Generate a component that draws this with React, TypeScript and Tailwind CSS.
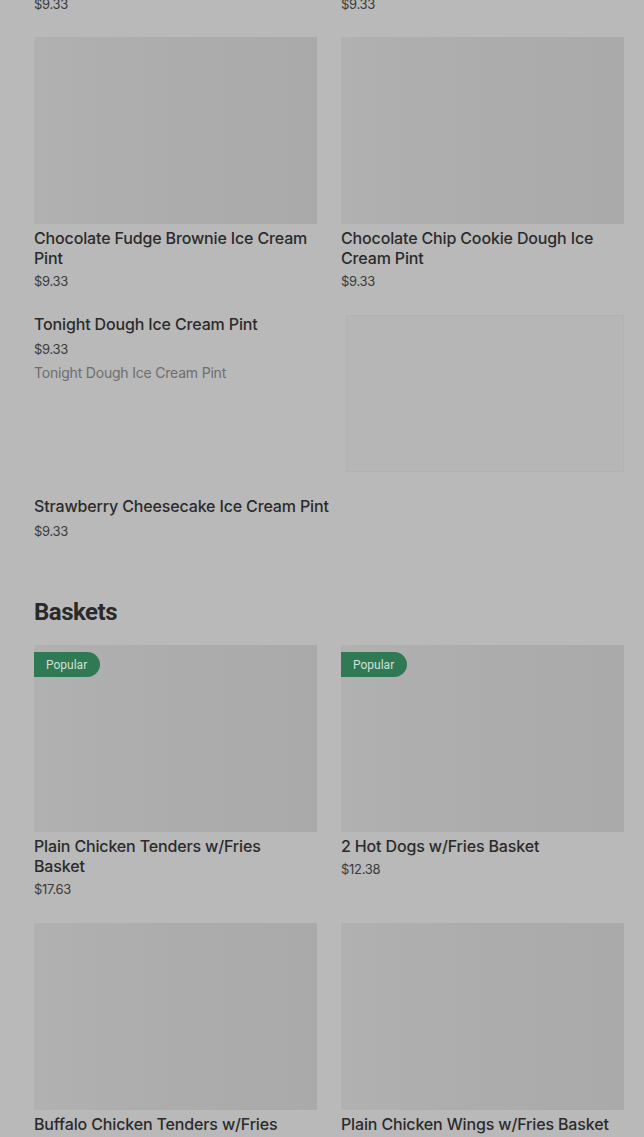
import React from 'react';

// one menu tile: placeholder picture, name and price
interface ItemProps {
    title: string;
    price: string;
    popular?: boolean;
}

const Item: React.FC<ItemProps> = ({ title, price, popular }) => {
    return (
        <div className="flex flex-col">
            <div className="relative h-[187px] w-full bg-gradient-to-r from-[#b1b1b1] via-[#acacac] to-[#aaaaaa]">
                {popular && (
                    <span className="absolute left-0 top-[7px] flex h-[25px] items-center rounded-r-full bg-[#2f7a55] pl-3 pr-[13px] font-['Roboto',sans-serif] text-[12px] text-[#cfe0d6]">
                        Popular
                    </span>
                )}
            </div>
            <p className="mt-1 pr-[6px] text-[16px] font-medium leading-5 tracking-[-0.15px] text-[#2b2b2b]">{title}</p>
            <p className="mt-1 text-[13px] leading-[18px] tracking-[-0.3px] text-[#3b3b3b]">{price}</p>
        </div>
    );
};

export default function App() {
    return (
        <div className="min-h-screen overflow-hidden bg-[#b9b9b9] pl-[34px] pr-[20px] font-['Inter',sans-serif]">
            {/* tail of the row that is scrolled above */}
            <div className="-mt-[5px] grid grid-cols-2 gap-x-6">
                <p className="text-[13px] leading-[18px] tracking-[-0.3px] text-[#3b3b3b]">$9.33</p>
                <p className="text-[13px] leading-[18px] tracking-[-0.3px] text-[#3b3b3b]">$9.33</p>
            </div>

            <div className="mt-6 grid grid-cols-2 gap-x-6">
                <Item title="Chocolate Fudge Brownie Ice Cream Pint" price="$9.33" />
                <Item title="Chocolate Chip Cookie Dough Ice Cream Pint" price="$9.33" />
            </div>

            <div className="mt-6 flex justify-between">
                <div className="flex flex-col">
                    <p className="text-[16px] font-medium leading-5 tracking-[-0.15px] text-[#2b2b2b]">Tonight Dough Ice Cream Pint</p>
                    <p className="mt-[6px] text-[13px] leading-[18px] tracking-[-0.3px] text-[#3b3b3b]">$9.33</p>
                    <p className="mt-[6px] text-[14px] leading-[18px] tracking-[-0.2px] text-[#6e6e6e]">Tonight Dough Ice Cream Pint</p>
                </div>
                <div className="mt-px h-[157px] w-[278px] border border-[#b2b2b2] bg-[#b6b6b6]" />
            </div>

            <div className="mt-6 flex flex-col">
                <p className="text-[16px] font-medium leading-5 tracking-[-0.15px] text-[#2b2b2b]">Strawberry Cheesecake Ice Cream Pint</p>
                <p className="mt-[6px] text-[13px] leading-[18px] tracking-[-0.3px] text-[#3b3b3b]">$9.33</p>
            </div>

            <h2 className="mt-[58px] font-['Roboto',sans-serif] text-[24px] font-bold leading-7 tracking-[-0.5px] text-[#2a2a2a]">Baskets</h2>

            <div className="mt-[19px] grid grid-cols-2 gap-x-6 gap-y-[25px]">
                <Item title="Plain Chicken Tenders w/Fries Basket" price="$17.63" popular />
                <Item title="2 Hot Dogs w/Fries Basket" price="$12.38" popular />
                <Item title="Buffalo Chicken Tenders w/Fries Basket" price="$17.63" />
                <Item title="Plain Chicken Wings w/Fries Basket" price="$15.75" />
            </div>
        </div>
    );
}
